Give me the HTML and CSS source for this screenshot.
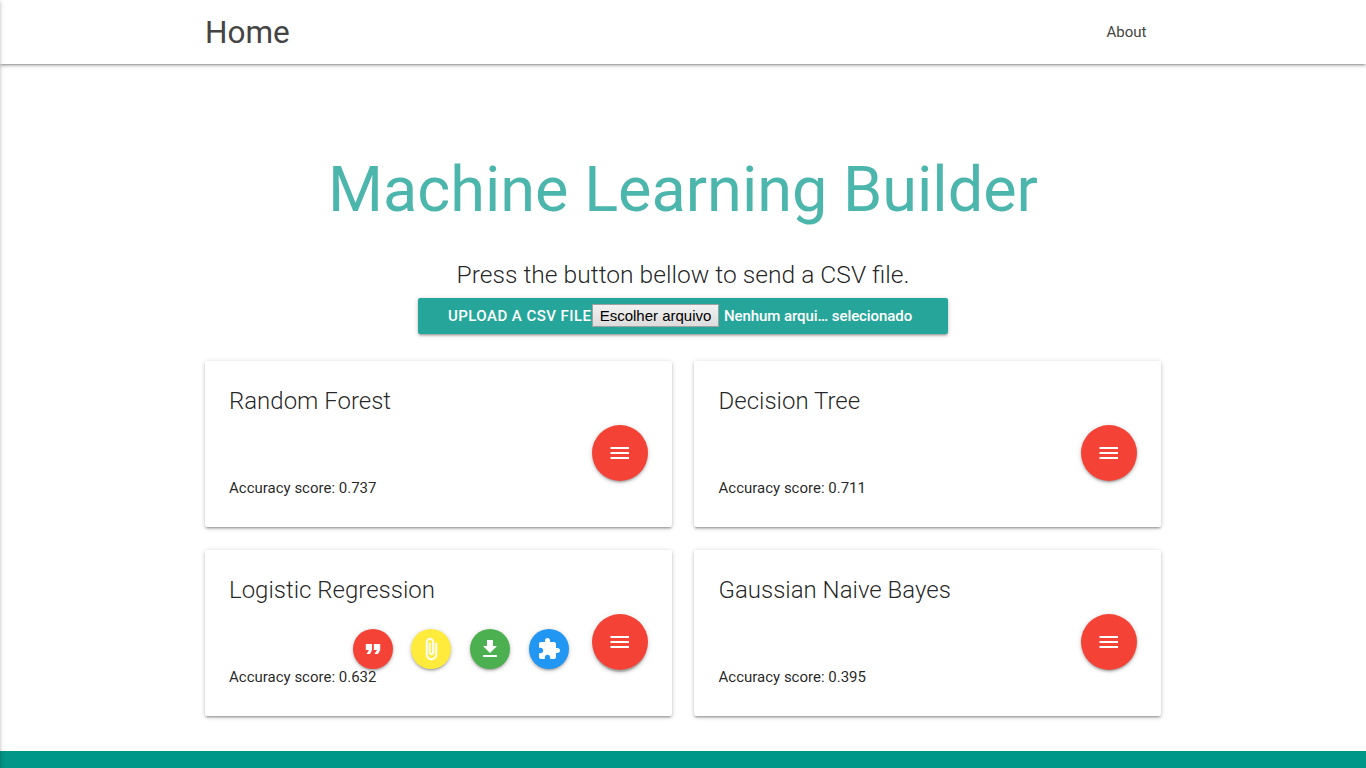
FILE: index.html
```html
<!DOCTYPE html>
<html lang="en">
<head>
<meta charset="utf-8">
<title>Machine Learning Builder</title>
<link rel="stylesheet" href="styles.css">
</head>
<body>
<svg width="0" height="0" class="defs">
  <symbol id="menu" viewBox="0 0 24 24"><path d="M2.500 18h18.500v-2H2.500v2zm0-5h18.500v-2H2.500v2zm0-7v2h18.500V6H2.500z"/></symbol>
  <symbol id="quote" viewBox="0 0 24 24"><path d="M5.500 17h3.500l2-4V7H4.800v6h3.200zm8 0h3.500l2.200-4V7h-6.400v6h3.200z"/></symbol>
  <symbol id="attach" viewBox="0 0 24 24"><path d="M16.500 6v11.500c0 2.210-1.790 4-4 4s-4-1.790-4-4V5c0-1.380 1.120-2.500 2.500-2.500s2.500 1.120 2.500 2.500v10.500c0 .55-.45 1-1 1s-1-.45-1-1V6H10v9.500c0 1.380 1.120 2.500 2.500 2.500s2.500-1.120 2.500-2.500V5c0-2.210-1.790-4-4-4S7 2.790 7 5v12.500c0 3.040 2.460 5.500 5.500 5.500s5.500-2.460 5.500-5.500V6h-1.500z"/></symbol>
  <symbol id="download" viewBox="0 0 24 24"><path d="M19 9h-4V3H9v6H5l7 7 7-7zM5 18v2h14v-2H5z"/></symbol>
  <symbol id="extension" viewBox="0 0 24 24"><path d="M20.500 11H19V7c0-1.100-.9-2-2-2h-4V3.500C13 2.120 11.880 1 10.500 1S8 2.120 8 3.500V5H4c-1.100 0-1.990.9-1.990 2v3.800H3.500c1.490 0 2.700 1.210 2.700 2.700s-1.210 2.700-2.700 2.700H2V20c0 1.100.9 2 2 2h3.800v-1.500c0-1.490 1.210-2.700 2.700-2.700 1.490 0 2.700 1.210 2.700 2.700V22H17c1.100 0 2-.9 2-2v-4h1.500c1.380 0 2.500-1.120 2.500-2.500S21.880 11 20.500 11z"/></symbol>
</svg>
<aside class="sidenav"></aside>
<nav class="navbar">
  <div class="nav-inner container">
    <a class="brand">Home</a>
    <a class="nav-link">About</a>
  </div>
</nav>
<main class="container">
  <h1 class="title">Machine Learning Builder</h1>
  <h5 class="subtitle">Press the button bellow to send a CSV file.</h5>
  <div class="upload">
    <span class="upload-label">UPLOAD A CSV FILE</span><button class="choose">Escolher arquivo</button><span class="file-name">Nenhum arqui… selecionado</span>
  </div>
  <section class="cards">
    <article class="card">
      <h2 class="card-title">Random Forest</h2>
      <p class="score">Accuracy score: 0.737</p>
      <button class="fab" aria-label="Menu"><svg><use href="#menu"/></svg></button>
    </article>
    <article class="card">
      <h2 class="card-title">Decision Tree</h2>
      <p class="score">Accuracy score: 0.711</p>
      <button class="fab" aria-label="Menu"><svg><use href="#menu"/></svg></button>
    </article>
    <article class="card">
      <h2 class="card-title">Logistic Regression</h2>
      <p class="score">Accuracy score: 0.632</p>
      <div class="actions">
        <button class="action red" aria-label="Quote"><svg><use href="#quote"/></svg></button>
        <button class="action yellow" aria-label="Attach"><svg><use href="#attach"/></svg></button>
        <button class="action green" aria-label="Download"><svg><use href="#download"/></svg></button>
        <button class="action blue" aria-label="Extension"><svg><use href="#extension"/></svg></button>
      </div>
      <button class="fab raised" aria-label="Menu"><svg><use href="#menu"/></svg></button>
    </article>
    <article class="card">
      <h2 class="card-title">Gaussian Naive Bayes</h2>
      <p class="score">Accuracy score: 0.395</p>
      <button class="fab" aria-label="Menu"><svg><use href="#menu"/></svg></button>
    </article>
  </section>
</main>
<footer class="footer"></footer>
</body>
</html>
```
FILE: styles.css
```css
* { box-sizing: border-box; }
body {
  margin: 0;
  height: 768px;
  overflow: hidden;
  background: #fff;
  color: rgba(0, 0, 0, .87);
  font: 15px/22.5px Roboto, sans-serif;
}
h1, h2, h5, p { margin: 0; }
button { padding: 0; border: 0; }
.defs { position: absolute; }
.container { width: 956px; margin: 0 auto; }
/* Closed drawer: only its shadow reaches the viewport edge */
.sidenav {
  position: fixed;
  z-index: 10;
  top: 0;
  left: -300px;
  width: 300px;
  height: 110%;
  box-shadow: 0 2px 2px 0 rgba(0,0,0,.14), 0 3px 1px -2px rgba(0,0,0,.12), 0 1px 5px 0 rgba(0,0,0,.2);
}
.navbar {
  height: 64px;
  box-shadow: 0 2px 2px 0 rgba(0,0,0,.14), 0 3px 1px -2px rgba(0,0,0,.12), 0 1px 5px 0 rgba(0,0,0,.2);
}
.nav-inner { display: flex; justify-content: space-between; height: 64px; line-height: 64px; color: #444; }
.brand { padding-top: 1px; font-size: 31.5px; }
.nav-link { padding: 0 14.6px; }
.title {
  margin-top: 91px;
  font-size: 63px;
  font-weight: 400;
  line-height: 69px;
  text-align: center;
  color: #4db6ac;
}
.subtitle { margin-top: 36px; font-size: 24.6px; font-weight: 300; line-height: 30px; text-align: center; }
.upload {
  display: flex;
  align-items: center;
  width: 530px;
  height: 36px;
  margin: 8px auto 0;
  padding-left: 30px;
  border-radius: 2px;
  background: #26a69a;
  color: #fff;
  font-weight: 500;
  box-shadow: 0 2px 2px 0 rgba(0,0,0,.14), 0 3px 1px -2px rgba(0,0,0,.12), 0 1px 5px 0 rgba(0,0,0,.2);
}
.upload-label { width: 144px; letter-spacing: .45px; white-space: nowrap; }
.choose {
  width: 127px;
  height: 23px;
  margin: 0 5px 2px 0;
  border: 1px solid #a0a0a0;
  background: linear-gradient(#f2f2f2, #dcdcdc);
  color: #000;
  font: 15px "Liberation Sans", sans-serif;
}
.file-name { letter-spacing: -.07px; white-space: nowrap; }
.cards { display: grid; grid-template-columns: 467px 467px; gap: 23px 22px; margin-top: 27px; }
.card {
  position: relative;
  height: 166px;
  padding: 24px;
  border-radius: 2px;
  background: #fff;
  box-shadow: 0 2px 2px 0 rgba(0,0,0,.14), 0 3px 1px -2px rgba(0,0,0,.12), 0 1px 5px 0 rgba(0,0,0,.2);
}
.card:nth-child(even) { padding-left: 24.5px; }
.card-title { font-size: 24px; font-weight: 300; line-height: 32px; }
.score { margin-top: 60px; }
.fab, .action { display: grid; place-items: center; border-radius: 50%; }
.fab {
  position: absolute;
  right: 24px;
  top: 64px;
  width: 56px;
  height: 56px;
  background: #f44336;
  box-shadow: 0 2px 2px 0 rgba(0,0,0,.14), 0 3px 1px -2px rgba(0,0,0,.12), 0 1px 5px 0 rgba(0,0,0,.2);
}
.raised { box-shadow: 0 3px 3px 0 rgba(0,0,0,.14), 0 1px 7px 0 rgba(0,0,0,.12), 0 3px 1px -1px rgba(0,0,0,.2); }
.fab svg, .action svg { width: 24px; height: 24px; fill: #fff; }
.actions { position: absolute; left: 148px; top: 79px; display: grid; grid-template-columns: 58px 59px 59px 40px; }
.action {
  width: 40px;
  height: 40px;
  box-shadow: 0 2px 2px 0 rgba(0,0,0,.14), 0 3px 1px -2px rgba(0,0,0,.12), 0 1px 5px 0 rgba(0,0,0,.2);
}
.red { background: #f44336; }
.yellow { background: #ffeb3b; }
.yellow svg { stroke: #fff; stroke-width: .5; }
.green { background: #4caf50; }
.blue { background: #2196f3; }
.footer { height: 30px; margin-top: 35px; background: #009688; }
```
